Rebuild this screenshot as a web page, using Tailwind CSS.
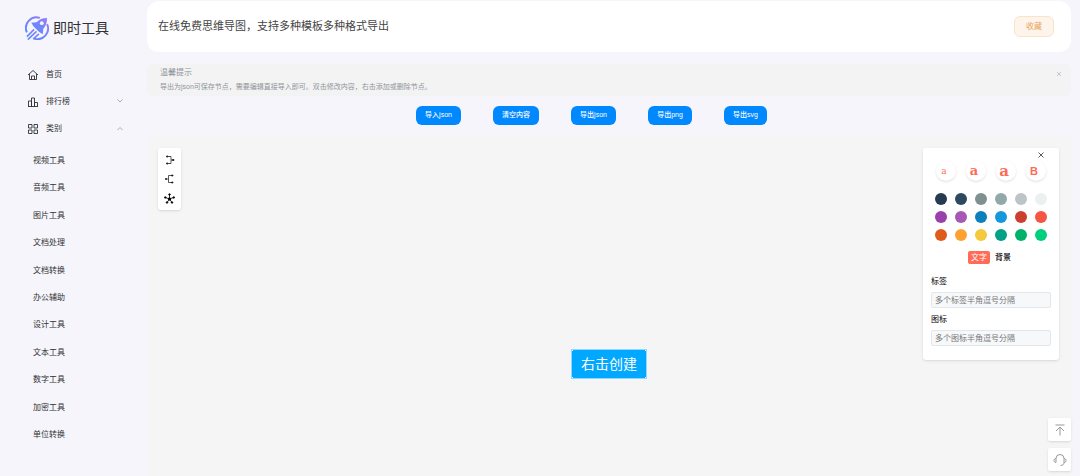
<!DOCTYPE html>
<html lang="zh-CN">
<head>
<meta charset="utf-8">
<title>即时工具</title>
<script src="https://cdn.jsdelivr.net/npm/@tailwindcss/browser@4"></script>
</head>
<body class="flex h-screen overflow-hidden bg-[#f5f5fb] font-['Liberation_Sans','Noto_Sans_CJK_SC',sans-serif] text-[8px] text-[#303133]">
<aside class="w-[147px] shrink-0">
  <a href="#" class="mt-4 ml-[25px] flex h-6 items-center gap-1 text-[14px]">
    <svg class="size-6" viewBox="0 0 50 50" fill="none">
      <defs><linearGradient id="g" x1="0" y1="1" x2="1" y2="0"><stop stop-color="#4d8dff"/><stop offset="1" stop-color="#9a7cf8"/></linearGradient></defs>
      <path d="M4 34A22 22 0 0 1 31 4M46 17A22 22 0 0 1 19 47" stroke="url(#g)" stroke-width="4"/>
      <path d="M46 4C36 4 30 7 24 13L13 14l5 8 11 11 8 5 1-11C43 21 46 14 46 4Z" fill="url(#g)"/>
      <circle cx="35" cy="15" r="4" fill="#f5f5fb"/>
      <path d="M19 28L4 43M24 32L6 49M29 37L17 48" stroke="url(#g)" stroke-width="3.500"/>
    </svg>
    <span>即时工具</span>
  </a>
  <nav class="mt-[21px]">
    <a href="#" class="flex h-[27px] items-center gap-2 pl-7">
      <svg class="size-[10px]" viewBox="0 0 20 20" fill="none" stroke="#303133" stroke-width="1.8"><path d="M0 10l10-9 10 9M3 8v11h14V8M7 19v-7h6v7"/></svg>
      <span>首页</span>
    </a>
    <button type="button" class="flex h-[27px] w-full items-center gap-2 pr-6 pl-7">
      <svg class="size-[10px]" viewBox="0 0 20 20" fill="none" stroke="#303133" stroke-width="1.8"><path d="M1 19V8h6v11M7 19V2h6v17M13 19v-8h6v8M0 19h20"/></svg>
      <span>排行榜</span>
      <svg class="mb-0.5 ml-auto size-[6px]" viewBox="0 0 12 12" fill="none" stroke="#909399" stroke-width="1.5"><path d="M1 3l5 5 5-5"/></svg>
    </button>
    <button type="button" class="flex h-[27px] w-full items-center gap-2 pr-6 pl-7">
      <svg class="size-[10px]" viewBox="0 0 20 20" fill="none" stroke="#303133" stroke-width="1.8"><path d="M1 1h7v7H1zM12 1h7v7h-7zM1 12h7v7H1zM12 12h7v7h-7z"/></svg>
      <span>类别</span>
      <svg class="ml-auto size-[6px]" viewBox="0 0 12 12" fill="none" stroke="#909399" stroke-width="1.5"><path d="M1 8l5-5 5 5"/></svg>
    </button>
    <ul class="mt-[11px] flex h-[289px] flex-col justify-between pl-[33px] leading-[15px]">
      <li><a href="#">视频工具</a></li>
      <li><a href="#">音频工具</a></li>
      <li><a href="#">图片工具</a></li>
      <li><a href="#">文档处理</a></li>
      <li><a href="#">文档转换</a></li>
      <li><a href="#">办公辅助</a></li>
      <li><a href="#">设计工具</a></li>
      <li><a href="#">文本工具</a></li>
      <li><a href="#">数字工具</a></li>
      <li><a href="#">加密工具</a></li>
      <li><a href="#">单位转换</a></li>
    </ul>
  </nav>
</aside>

<main class="mr-[9px] flex min-w-0 grow flex-col pt-px">
  <header class="flex h-[51px] shrink-0 items-center justify-between rounded-xl bg-white pr-[17px] pl-[11px]">
    <h1 class="text-[11px] text-[#444]">在线免费思维导图，支持多种模板多种格式导出</h1>
    <button type="button" class="h-[21px] w-10 rounded-md border border-[#fbe3c6] bg-[#fdf5ec] text-[#eba35c]">收藏</button>
  </header>
  <section class="mt-3 flex h-8 shrink-0 items-start justify-between rounded-md bg-[#f3f3f4] pt-[3px] pr-[9px] pl-[13px] text-[#909399]">
    <div>
      <h2 class="leading-3">温馨提示</h2>
      <p class="text-[7px] leading-[15px]">导出为json可保存节点，需要编辑直接导入即可。双击修改内容，右击添加或删除节点。</p>
    </div>
    <button type="button" aria-label="关闭提示" class="mt-1"><svg class="size-[6px]" viewBox="0 0 12 12" stroke="#b4b7bd" stroke-width="1.5"><path d="M2 2l8 8M10 2l-8 8"/></svg></button>
  </section>
  <div class="mt-[10px] flex shrink-0 justify-center gap-8 pr-[35px] text-[7px] font-medium text-white">
    <button type="button" class="h-[19px] w-[45px] rounded-md bg-[#0088ff]">导入json</button>
    <button type="button" class="h-[19px] w-[46px] rounded-md bg-[#0088ff]">清空内容</button>
    <button type="button" class="h-[19px] w-[45px] rounded-md bg-[#0088ff]">导出json</button>
    <button type="button" class="h-[19px] w-[44px] rounded-md bg-[#0088ff]">导出png</button>
    <button type="button" class="h-[19px] w-[43px] rounded-md bg-[#0088ff]">导出svg</button>
  </div>
  <section class="relative mt-[11px] grow bg-[#f5f5f5]">
    <div class="absolute top-3 left-[11px] flex w-[23px] flex-col items-center gap-[9px] rounded-[3px] bg-white pt-[7px] pb-[6px] shadow-sm">
      <button type="button" aria-label="左侧布局"><svg class="block size-[10px]" viewBox="0 0 20 20" fill="none" stroke="#222" stroke-width="1.5"><path d="M4 3h8v14H4M12 10h6"/><path fill="#222" d="M3 2h3v2H3zM3 16h3v2H3zM15 9h3v2h-3z"/></svg></button>
      <button type="button" aria-label="右侧布局"><svg class="block size-[10px]" viewBox="0 0 20 20" fill="none" stroke="#222" stroke-width="1.5"><path d="M15 3H7v14h8M1 10h6"/><path fill="#222" d="M13 2h3v2h-3zM13 16h3v2h-3zM1 9h2v2H1z"/></svg></button>
      <button type="button" aria-label="双侧布局"><svg class="block size-[11px]" viewBox="0 0 22 22" stroke="#000" stroke-width="1.6"><path d="M11 12V3M11 12L3 9M11 12l8-3M11 12l-5 7M11 12l5 7"/><circle cx="11" cy="12" r="2.5"/><circle cx="11" cy="3" r="1.6"/><circle cx="2.5" cy="9" r="1.6"/><circle cx="19.500" cy="9" r="1.6"/><circle cx="6" cy="19" r="1.6"/><circle cx="16" cy="19" r="1.6"/></svg></button>
    </div>

    <div class="absolute top-[213px] left-[424px] flex h-[30px] w-[76px] items-center justify-center border border-[#8fd8ff] bg-[#00a8ff] text-[14px] text-white">右击创建
      <i class="absolute top-0 left-0 size-px bg-white"></i><i class="absolute top-0 right-0 size-px bg-white"></i><i class="absolute bottom-0 left-0 size-px bg-white"></i><i class="absolute right-0 bottom-0 size-px bg-white"></i>
    </div>

    <div class="absolute top-3 right-3 w-[136px] rounded-[3px] bg-white px-2 pb-[14px] shadow-sm">
      <div class="flex h-[13px] items-center justify-end pr-[7px]"><button type="button" aria-label="关闭"><svg class="block size-[6px]" viewBox="0 0 12 12" stroke="#333" stroke-width="1.6"><path d="M1 1l10 10M11 1L1 11"/></svg></button></div>
      <div class="flex gap-[10px] pl-[5px] font-bold text-[#ff6b57]">
        <button type="button" class="size-5 rounded-full pr-1 font-['DejaVu_Serif',serif] text-[9px] leading-5 font-normal shadow-sm">a</button>
        <button type="button" class="size-5 rounded-full pr-1 font-['DejaVu_Serif',serif] text-[13px] leading-5 shadow-sm">a</button>
        <button type="button" class="size-5 rounded-full pr-1 font-['DejaVu_Serif',serif] text-[15px] leading-5 shadow-sm">a</button>
        <button type="button" class="size-5 rounded-full pr-1 font-['Liberation_Sans',sans-serif] text-[11px] leading-5 shadow-sm">B</button>
      </div>
      <div class="mt-3 grid grid-cols-6 justify-items-center gap-y-[6px]">
        <button type="button" aria-label="#273c52" class="size-3 rounded-full bg-[#273b50]"></button>
        <button type="button" aria-label="#2f4961" class="size-3 rounded-full bg-[#2e4860]"></button>
        <button type="button" aria-label="#7f8f8f" class="size-3 rounded-full bg-[#7f9090]"></button>
        <button type="button" aria-label="#92a7a8" class="size-3 rounded-full bg-[#92a8a9]"></button>
        <button type="button" aria-label="#bcc4c9" class="size-3 rounded-full bg-[#bcc4c8]"></button>
        <button type="button" aria-label="#ebf0f1" class="size-3 rounded-full bg-[#ebf0f1]"></button>
        <button type="button" aria-label="#9a40ac" class="size-3 rounded-full bg-[#9a40ac]"></button>
        <button type="button" aria-label="#a658b5" class="size-3 rounded-full bg-[#a658b5]"></button>
        <button type="button" aria-label="#0b80bb" class="size-3 rounded-full bg-[#0b80bb]"></button>
        <button type="button" aria-label="#1597dc" class="size-3 rounded-full bg-[#1597dc]"></button>
        <button type="button" aria-label="#cc3f2f" class="size-3 rounded-full bg-[#cc3f2f]"></button>
        <button type="button" aria-label="#f55543" class="size-3 rounded-full bg-[#f55543]"></button>
        <button type="button" aria-label="#df5b19" class="size-3 rounded-full bg-[#df5b19]"></button>
        <button type="button" aria-label="#fda232" class="size-3 rounded-full bg-[#fda232]"></button>
        <button type="button" aria-label="#f4c93b" class="size-3 rounded-full bg-[#f4c93b]"></button>
        <button type="button" aria-label="#00a186" class="size-3 rounded-full bg-[#00a186]"></button>
        <button type="button" aria-label="#00b269" class="size-3 rounded-full bg-[#00b269]"></button>
        <button type="button" aria-label="#00d07d" class="size-3 rounded-full bg-[#00d07d]"></button>
      </div>
      <div class="mt-[10px] flex justify-center gap-[2px] leading-[13px] text-black">
        <button type="button" class="w-[22px] rounded-[2px] bg-[#ff6b57] text-white">文字</button>
        <button type="button" class="w-[22px] font-medium">背景</button>
      </div>
      <label for="tags" class="mt-3 block leading-[11px] text-black">标签</label>
      <input id="tags" placeholder="多个标签半角逗号分隔" class="mt-[5px] block h-4 w-full rounded-[2px] border border-[#e1e7eb] bg-[#f6f8fa] px-[3px] placeholder:text-[#777]">
      <label for="icons" class="mt-[6px] block leading-[11px] text-black">图标</label>
      <input id="icons" placeholder="多个图标半角逗号分隔" class="mt-[5px] block h-4 w-full rounded-[2px] border border-[#e1e7eb] bg-[#f6f8fa] px-[3px] placeholder:text-[#777]">
    </div>
  </section>
</main>

<div class="fixed right-[9px] bottom-[5px] grid gap-[7px]">
  <button type="button" aria-label="回到顶部" class="flex size-[23px] items-center justify-center rounded-[2px] bg-white shadow-sm"><svg class="size-3" viewBox="0 0 24 24" fill="none" stroke="#999" stroke-width="2"><path d="M3 2h18M12 23V6M4 14l8-8 8 8"/></svg></button>
  <button type="button" aria-label="客服" class="flex size-[23px] items-center justify-center rounded-[2px] bg-white shadow-sm"><svg class="size-[14px]" viewBox="0 0 28 28" fill="none" stroke="#999" stroke-width="2"><path d="M6 19V11a8 8 0 0 1 16 0v8c0 4-3 6-7 6M6 11c-3 0-4 2-4 4s1 4 4 4M22 11c3 0 4 2 4 4s-1 4-4 4"/></svg></button>
</div>
</body>
</html>
